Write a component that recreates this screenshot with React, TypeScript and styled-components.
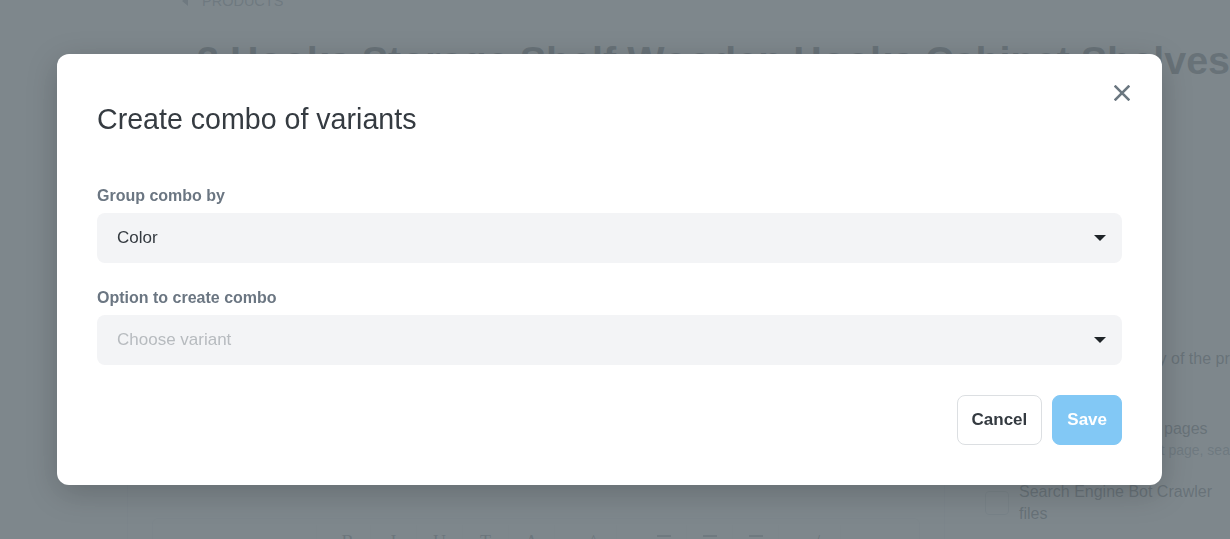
import React from "react";
import styled, { createGlobalStyle } from "styled-components";

const GlobalStyle = createGlobalStyle`
  *, *::before, *::after { box-sizing: border-box; }
  html, body {
    margin: 0;
    padding: 0;
    width: 100%;
    height: 100%;
    overflow: hidden;
    background: #ffffff;
  }
  body {
    font-family: "Liberation Sans", Arial, sans-serif;
    color: #212b36;
  }
  #root {
    width: 100vw;
    height: 100vh;
    overflow: hidden;
    position: relative;
  }
`;

/* ---------- background page ---------- */

const Page = styled.div`
  width: 1260px;
  display: flex;
  flex-direction: column;
`;

const Header = styled.header`
  display: flex;
  flex-direction: column;
  padding-left: 182px;
`;

const Breadcrumb = styled.nav`
  margin-top: -7px;
  height: 16px;
  display: flex;
  align-items: center;
  gap: 14px;
  font-size: 14.5px;
  line-height: 16px;
  text-transform: uppercase;
  color: #637381;
`;

const PageTitle = styled.h1`
  margin: 27px 0 0 15px;
  font-size: 39.5px;
  line-height: 48px;
  font-weight: 700;
  color: #212b36;
  white-space: nowrap;
`;

const Columns = styled.div`
  display: grid;
  grid-template-columns: 818px 240px;
  column-gap: 40px;
  padding-left: 127px;
`;

const MainCard = styled.section`
  border: 1px solid #e6e9ed;
  border-bottom: none;
  border-radius: 8px 8px 0 0;
  padding: 17px 24px 0;
  display: flex;
  flex-direction: column;
  height: 600px;
`;

const FieldCaption = styled.div`
  font-size: 16px;
  line-height: 24px;
  font-weight: 700;
  margin-bottom: 8px;
`;

const FakeInput = styled.div`
  height: 44px;
  border: 1px solid #dfe3e8;
  border-radius: 6px;
  margin-bottom: 24px;
`;

const DropZone = styled.div`
  height: 195px;
  border: 1px dashed #c4cdd5;
  border-radius: 6px;
  margin-bottom: 24px;
`;

const Editor = styled.div`
  margin-top: 33px;
  border: 1px solid #e6e9ed;
  border-radius: 6px;
  padding: 6px 8px;
`;

const Toolbar = styled.div`
  display: flex;
  align-items: center;
`;

const FormatSelect = styled.div`
  width: 156px;
  height: 34px;
  margin-right: 8px;
  border-right: 1px solid #eef1f3;
`;

const ToolButton = styled.div<{ $gapBefore?: number }>`
  width: 46px;
  height: 34px;
  margin-left: ${(p) => p.$gapBefore ?? 0}px;
  display: flex;
  align-items: center;
  justify-content: center;
  font-family: "Liberation Serif", "Times New Roman", serif;
  font-size: 18px;
  color: #454f5b;
  border-right: 1px solid #eef1f3;
`;

const SideColumn = styled.aside`
  display: flex;
  flex-direction: column;
  padding-top: 17px;
`;

const SideTitle = styled.h2`
  margin: 0 0 20px;
  font-size: 18px;
  line-height: 28px;
  font-weight: 700;
`;

const OptionList = styled.div`
  display: flex;
  flex-direction: column;
`;

const OptionRow = styled.div<{ $space?: number }>`
  display: flex;
  align-items: center;
  gap: 10px;
  margin-top: ${(p) => p.$space ?? 0}px;
`;

const CheckBox = styled.span`
  flex: 0 0 24px;
  width: 24px;
  height: 24px;
  border: 1px solid #c4cdd5;
  border-radius: 4px;
  background: #ffffff;
`;

const OptionText = styled.div`
  display: flex;
  flex-direction: column;
  min-width: 0;
`;

const OptionLabel = styled.span<{ $nowrap?: boolean }>`
  font-size: 16px;
  line-height: 22px;
  color: #212b36;
  white-space: ${(p) => (p.$nowrap ? "nowrap" : "normal")};
`;

const OptionHint = styled.span`
  font-size: 14px;
  line-height: 20px;
  color: #637381;
  white-space: nowrap;
`;

/* ---------- modal ---------- */

const Overlay = styled.div`
  position: fixed;
  inset: 0;
  background: rgba(112, 122, 128, 0.9);
  display: flex;
  align-items: center;
  padding-left: 57px;
`;

const Dialog = styled.div`
  position: relative;
  width: 1105px;
  background: #ffffff;
  border-radius: 12px;
  padding: 48px 40px 40px;
  box-shadow: 0 8px 32px rgba(0, 0, 0, 0.2);
  display: flex;
  flex-direction: column;
`;

const CloseButton = styled.button`
  position: absolute;
  top: 31px;
  right: 32px;
  width: 16px;
  height: 16px;
  padding: 0;
  border: none;
  background: none;
  display: flex;
  cursor: pointer;
`;

const DialogTitle = styled.h2`
  margin: 0;
  font-size: 28.6px;
  line-height: 34px;
  font-weight: 400;
  color: #353b41;
`;

const Form = styled.div`
  margin-top: 48px;
  display: flex;
  flex-direction: column;
  gap: 23px;
`;

const Field = styled.div`
  display: flex;
  flex-direction: column;
`;

const Label = styled.label`
  font-size: 16px;
  line-height: 24px;
  font-weight: 700;
  color: #6b7682;
  margin-bottom: 5px;
`;

const SelectBox = styled.div<{ $placeholder?: boolean }>`
  height: 50px;
  padding: 0 16px 0 20px;
  background: #f3f4f6;
  border-radius: 8px;
  display: flex;
  align-items: center;
  justify-content: space-between;
  font-size: 17px;
  color: ${(p) => (p.$placeholder ? "#b7bbbf" : "#343a40")};
`;

const Caret = styled.span`
  width: 0;
  height: 0;
  border-left: 6px solid transparent;
  border-right: 6px solid transparent;
  border-top: 6px solid #1f2428;
`;

const Actions = styled.div`
  margin-top: 30px;
  display: flex;
  justify-content: flex-end;
  gap: 10px;
`;

const Button = styled.button<{ $primary?: boolean }>`
  height: 50px;
  padding: 0 14px;
  border-radius: 8px;
  font-family: "Liberation Sans", Arial, sans-serif;
  font-size: 17px;
  font-weight: 700;
  cursor: pointer;
  border: 1px solid ${(p) => (p.$primary ? "#82c8f5" : "#dcdfe2")};
  background: ${(p) => (p.$primary ? "#82c8f5" : "#ffffff")};
  color: ${(p) => (p.$primary ? "#ffffff" : "#343a40")};
`;

const BackChevron = () => (
  <svg width="6" height="10" viewBox="0 0 6 10">
    <path d="M6 0 L0 5 L6 10 Z" fill="#637381" />
  </svg>
);

const CloseIcon = () => (
  <svg width="16" height="16" viewBox="0 0 16 16">
    <path
      d="M1.6 1.6 L14.4 14.4 M14.4 1.6 L1.6 14.4"
      stroke="#6b7780"
      strokeWidth="2.6"
      strokeLinecap="square"
      fill="none"
    />
  </svg>
);

const AlignIcon = () => (
  <svg width="16" height="14" viewBox="0 0 16 14">
    <path d="M1 1 H15 M1 5 H11 M1 9 H15 M1 13 H11" stroke="#454f5b" strokeWidth="1.4" />
  </svg>
);

export default function App() {
  return (
    <>
      <GlobalStyle />
      <Page>
        <Header>
          <Breadcrumb>
            <BackChevron />
            <span>Products</span>
          </Breadcrumb>
          <PageTitle>3 Hooks Storage Shelf Wooden Hooks Cabinet Shelves</PageTitle>
        </Header>
        <Columns>
          <MainCard>
            <FieldCaption>Title</FieldCaption>
            <FakeInput />
            <FieldCaption>Media</FieldCaption>
            <DropZone />
            <FieldCaption>Description</FieldCaption>
            <Editor>
              <Toolbar>
                <FormatSelect />
                <ToolButton>B</ToolButton>
                <ToolButton>I</ToolButton>
                <ToolButton>U</ToolButton>
                <ToolButton>T</ToolButton>
                <ToolButton>A</ToolButton>
                <ToolButton $gapBefore={16}>^</ToolButton>
                <ToolButton $gapBefore={24}>
                  <AlignIcon />
                </ToolButton>
                <ToolButton>
                  <AlignIcon />
                </ToolButton>
                <ToolButton>
                  <AlignIcon />
                </ToolButton>
                <ToolButton $gapBefore={16}>/</ToolButton>
              </Toolbar>
            </Editor>
          </MainCard>
          <SideColumn>
            <SideTitle>Visibility</SideTitle>
            <OptionList>
              <OptionRow>
                <CheckBox />
                <OptionText>
                  <OptionLabel>Online store</OptionLabel>
                  <OptionHint>Published</OptionHint>
                </OptionText>
              </OptionRow>
              <OptionRow $space={24}>
                <CheckBox />
                <OptionText>
                  <OptionLabel>Point of sale</OptionLabel>
                  <OptionHint>Not available</OptionHint>
                </OptionText>
              </OptionRow>
              <OptionRow $space={24}>
                <CheckBox />
                <OptionText>
                  <OptionLabel>Featured</OptionLabel>
                  <OptionHint>Homepage</OptionHint>
                </OptionText>
              </OptionRow>
              <OptionRow $space={25}>
                <CheckBox />
                <OptionText>
                  <OptionLabel $nowrap>Set a short summary of the product</OptionLabel>
                  <OptionHint>Below title</OptionHint>
                </OptionText>
              </OptionRow>
              <OptionRow $space={28}>
                <CheckBox />
                <OptionText>
                  <OptionLabel>Show on all product pages</OptionLabel>
                  <OptionHint>Appears on the product page, search results</OptionHint>
                </OptionText>
              </OptionRow>
              <OptionRow $space={21}>
                <CheckBox />
                <OptionText>
                  <OptionLabel>Search Engine Bot Crawler files</OptionLabel>
                </OptionText>
              </OptionRow>
            </OptionList>
          </SideColumn>
        </Columns>
      </Page>

      <Overlay>
        <Dialog role="dialog" aria-modal="true">
          <CloseButton aria-label="Close">
            <CloseIcon />
          </CloseButton>
          <DialogTitle>Create combo of variants</DialogTitle>
          <Form>
            <Field>
              <Label>Group combo by</Label>
              <SelectBox>
                <span>Color</span>
                <Caret />
              </SelectBox>
            </Field>
            <Field>
              <Label>Option to create combo</Label>
              <SelectBox $placeholder>
                <span>Choose variant</span>
                <Caret />
              </SelectBox>
            </Field>
          </Form>
          <Actions>
            <Button>Cancel</Button>
            <Button $primary>Save</Button>
          </Actions>
        </Dialog>
      </Overlay>
    </>
  );
}
